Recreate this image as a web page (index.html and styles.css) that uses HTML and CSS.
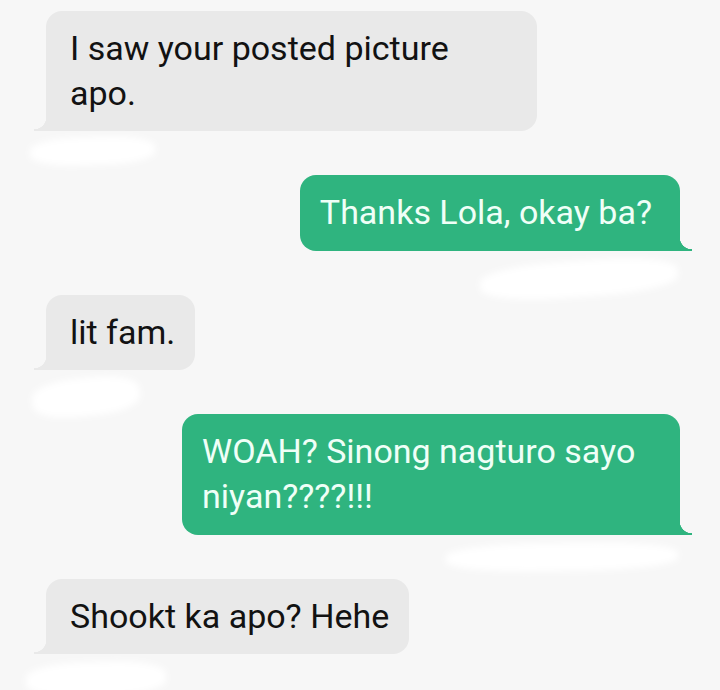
FILE: index.html
```html
<!DOCTYPE html>
<html lang="tl">
<head>
<meta charset="utf-8">
<title>Chat</title>
<link rel="stylesheet" href="styles.css">
</head>
<body>
<main class="chat">
  <div class="msg in">
    <div class="bubble">I saw your posted picture apo.</div>
    <div class="smudge s1"></div>
  </div>
  <div class="msg out">
    <div class="bubble">Thanks Lola, okay ba?</div>
    <div class="smudge s2"></div>
  </div>
  <div class="msg in">
    <div class="bubble">lit fam.</div>
    <div class="smudge s3"></div>
  </div>
  <div class="msg out">
    <div class="bubble">WOAH? Sinong nagturo sayo niyan????!!!</div>
    <div class="smudge s4"></div>
  </div>
  <div class="msg in">
    <div class="bubble">Shookt ka apo? Hehe</div>
    <div class="smudge s5"></div>
  </div>
</main>
</body>
</html>
```
FILE: styles.css
```css
html, body {
  margin: 0;
  padding: 0;
  background: #f7f7f7;
}
body {
  width: 720px;
  height: 690px;
  overflow: hidden;
  font-family: Roboto, "Liberation Sans", sans-serif;
}
.chat {
  display: flex;
  flex-direction: column;
  gap: 44px;
  padding: 11px 40px 0 46px;
}
.msg {
  position: relative;
  display: flex;
}
.msg.out {
  justify-content: flex-end;
}
.bubble {
  position: relative;
  box-sizing: border-box;
  font-size: 34px;
  line-height: 45px;
  border-radius: 16px;
}
.in .bubble {
  max-width: 491px;
  padding: 15px 20px 15px 24px;
  background: #e9e9e9;
  color: #121212;
  border-bottom-left-radius: 0;
}
.out .bubble {
  max-width: 498px;
  padding: 15px 28px 16px 20px;
  background: #2fb47f;
  color: #effff7;
  border-bottom-right-radius: 0;
}
.in .bubble::after,
.out .bubble::after {
  content: "";
  position: absolute;
  bottom: 0;
  width: 12px;
  height: 14px;
}
.in .bubble::after {
  left: -12px;
  background: radial-gradient(circle at top left, transparent 12px, #e9e9e9 12.5px);
}
.out .bubble::after {
  right: -12px;
  background: radial-gradient(circle at top right, transparent 12px, #2fb47f 12.5px);
}
.smudge {
  position: absolute;
  background: #ffffff;
  border-radius: 40%;
  filter: blur(3px);
}
.s1 { left: -16px; top: calc(100% + 6px); width: 125px; height: 28px; transform: rotate(-2deg); }
.s2 { right: 2px; top: calc(100% + 10px); width: 198px; height: 36px; transform: rotate(-4deg); }
.s3 { left: -14px; top: calc(100% + 8px); width: 108px; height: 38px; transform: rotate(-6deg); }
.s4 { right: 2px; top: calc(100% + 8px); width: 232px; height: 28px; transform: rotate(-1deg); }
.s5 { left: -20px; top: calc(100% + 8px); width: 140px; height: 34px; transform: rotate(-2deg); }
```
